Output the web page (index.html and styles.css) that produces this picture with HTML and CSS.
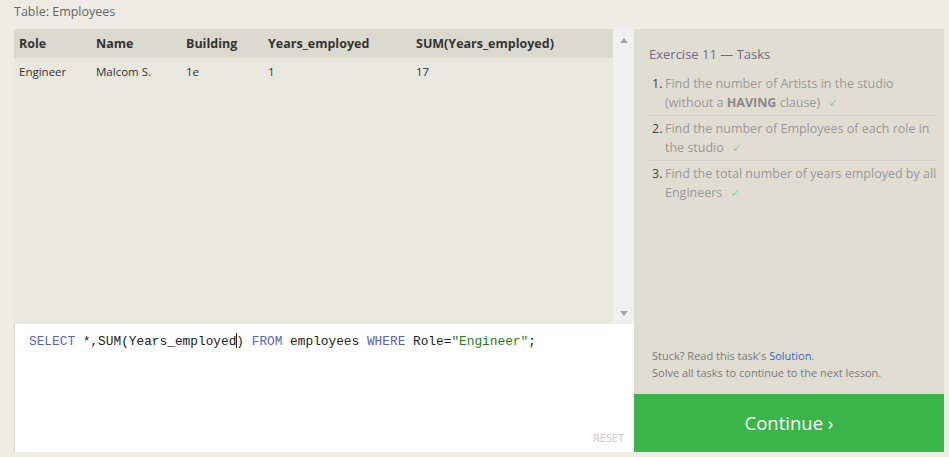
FILE: index.html
```html
<!DOCTYPE html>
<html>
<head>
<meta charset="utf-8">
<link rel="stylesheet" href="styles.css">
</head>
<body>
<div class="page">
  <div class="title">Table: Employees</div>
  <div class="main">
    <div class="left">
      <div class="results">
        <div class="table-wrap">
          <table class="grid">
            <thead>
              <tr><th class="c1">Role</th><th class="c2">Name</th><th class="c3">Building</th><th class="c4">Years_employed</th><th class="c5">SUM(Years_employed)</th></tr>
            </thead>
            <tbody>
              <tr><td>Engineer</td><td>Malcom S.</td><td>1e</td><td>1</td><td>17</td></tr>
            </tbody>
          </table>
        </div>
        <div class="scrollbar">
          <span class="arrow up"></span>
          <span class="arrow down"></span>
        </div>
      </div>
      <div class="editor">
        <div class="code"><span class="kw">SELECT</span> *,SUM(Years_employed<span class="cursor"></span>) <span class="kw">FROM</span> employees <span class="kw">WHERE</span> Role=<span class="str">"Engineer"</span>;</div>
        <div class="reset">RESET</div>
      </div>
    </div>
    <div class="right">
      <div class="tasks">
        <div class="heading">Exercise 11 — Tasks</div>
        <ol class="list">
          <li><span class="num">1.</span><span class="txt">Find the number of Artists in the studio (without a <b>HAVING</b> clause) <span class="check">✓</span></span></li>
          <li><span class="num">2.</span><span class="txt">Find the number of Employees of each role in the studio <span class="check">✓</span></span></li>
          <li><span class="num">3.</span><span class="txt">Find the total number of years employed by all Engineers <span class="check">✓</span></span></li>
        </ol>
      </div>
      <div class="help">
        <div>Stuck? Read this task's <span class="link">Solution</span>.</div>
        <div>Solve all tasks to continue to the next lesson.</div>
      </div>
      <div class="continue">Continue ›</div>
    </div>
  </div>
</div>
</body>
</html>
```
FILE: styles.css
```css
* { box-sizing: border-box; }
html, body { margin: 0; padding: 0; }
body {
  background: #eeece4;
  font-family: "Open Sans", "Noto Sans", sans-serif;
  width: 949px;
  height: 457px;
  overflow: hidden;
}
.page { padding: 3px 0 0 14px; }
.title {
  font-size: 12.5px;
  line-height: 18px;
  color: #666;
  height: 26px;
}
.main { display: flex; height: 423px; }
.left { width: 620px; display: flex; flex-direction: column; }
.results { height: 295px; display: flex; }
.table-wrap { width: 599px; background: #e9e8e0; }
.grid { border-collapse: collapse; width: 100%; table-layout: fixed; }
.grid th {
  background: #dbdacf;
  text-align: left;
  font-weight: 700;
  font-size: 12.5px;
  color: #333;
  height: 29px;
  padding: 0 0 0 5px;
}
.grid td {
  font-size: 11.5px;
  color: #333;
  height: 26px;
  padding: 0 0 0 5px;
}
.c1 { width: 77px; }
.c2 { width: 90px; }
.c3 { width: 82px; }
.c4 { width: 148px; }
.scrollbar {
  width: 21px;
  background: #f0f0f0;
  display: flex;
  flex-direction: column;
  justify-content: space-between;
  align-items: center;
  padding: 9px 0 8px;
}
.arrow { width: 0; height: 0; border-left: 4px solid transparent; border-right: 4px solid transparent; }
.arrow.up { border-bottom: 5px solid #a3a3a3; }
.arrow.down { border-top: 5px solid #a3a3a3; }
.editor {
  flex: 1;
  background: #fff;
  border-left: 1px solid #d6d6d0;
  display: flex;
  flex-direction: column;
  padding: 9px 10px 7px 14px;
}
.code {
  font-family: "Liberation Mono", "DejaVu Sans Mono", monospace;
  font-size: 12.8px;
  line-height: 18px;
  color: #222;
  flex: 1;
  white-space: pre;
}
.kw { color: #5a64b8; }
.str { color: #1f7f1f; }
.cursor { display: inline-block; width: 1px; margin-right: -1px; height: 15px; background: #222; vertical-align: -3px; }
.reset {
  align-self: flex-end;
  font-size: 11px;
  color: #c8c8c8;
  line-height: 14px;
}
.right {
  width: 310px;
  background: #e0ded3;
  display: flex;
  flex-direction: column;
}
.tasks { flex: 1; padding: 15px 7px 0 15px; }
.heading { font-size: 13px; color: #6e6d80; line-height: 20px; margin-bottom: 9px; }
.list { list-style: none; margin: 0; padding: 0; }
.list li {
  display: flex;
  font-size: 12.5px;
  line-height: 19px;
  color: #999;
  padding: 1px 0 3px;
}
.list li + li { border-top: 1px solid #d2d0c6; padding-top: 3px; }
.num { width: 16px; padding-left: 3px; color: #444; flex: none; }
.txt { flex: 1; }
.txt b { color: #888; }
.check {
  display: inline-block;
  color: #92d292;
  margin-left: 5px;
  font-family: "DejaVu Sans", sans-serif;
  font-size: 12px;
  line-height: 12px;
}
.help {
  padding: 0 0 13px 18px;
  font-size: 11px;
  line-height: 17px;
  color: #7a7a7a;
}
.link { color: #3a5fcd; }
.continue {
  height: 58px;
  background: #3ab54a;
  color: #fff;
  font-size: 18.5px;
  display: flex;
  align-items: center;
  justify-content: center;
  padding-bottom: 2px;
}
```
